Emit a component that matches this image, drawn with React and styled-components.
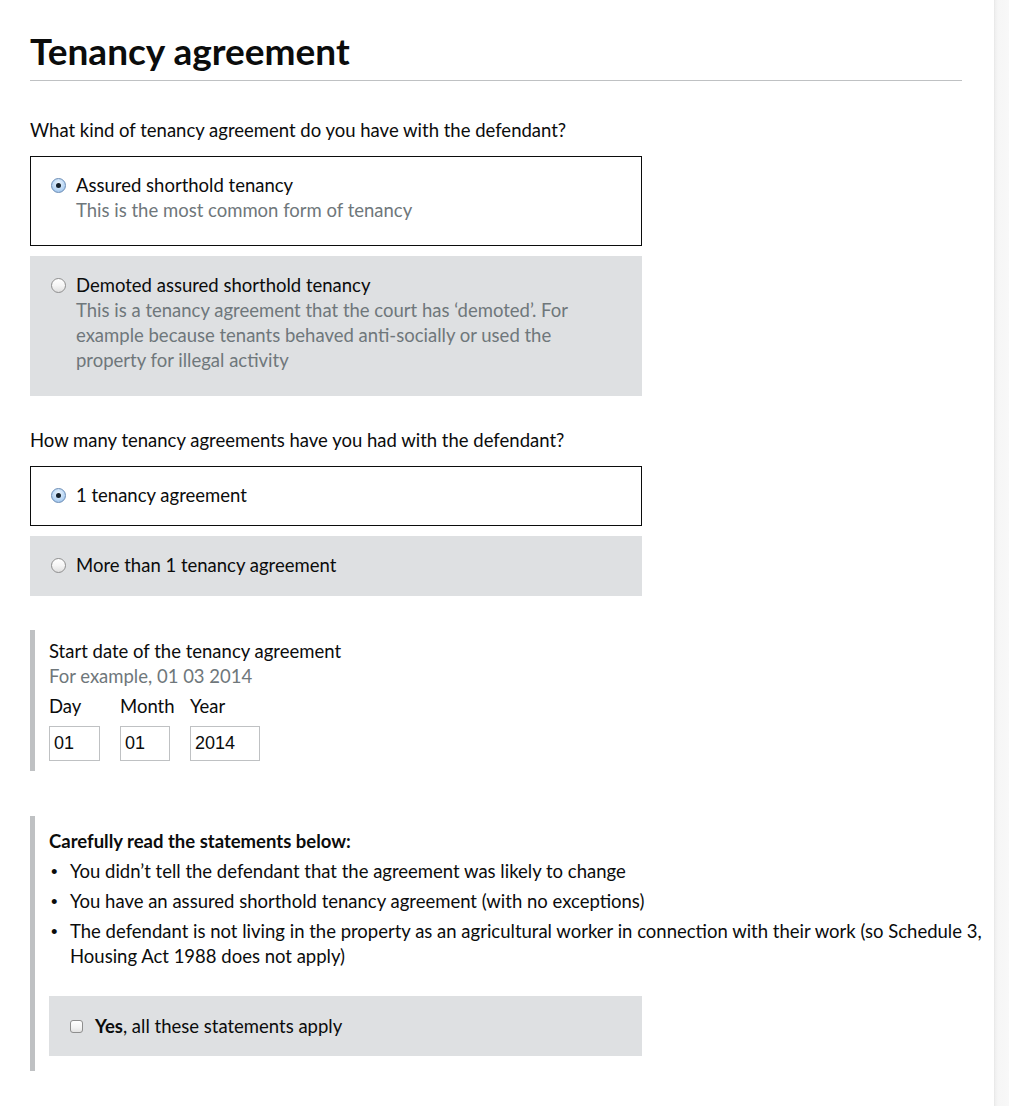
import React from "react";
import styled, { createGlobalStyle, css } from "styled-components";

const GlobalStyle = createGlobalStyle`
  html, body {
    margin: 0;
    padding: 0;
    background: #ffffff;
  }
  body {
    font-family: Lato, "Liberation Sans", Arial, sans-serif;
    color: #0b0c0c;
    font-size: 18.5px;
    line-height: 25px;
  }
  * { box-sizing: border-box; }
`;

const Page = styled.div`
  display: flex;
  min-height: 100vh;
`;

const Main = styled.main`
  flex: 1;
  min-width: 0;
  padding: 0 32px 40px 30px;
`;

const Scrollbar = styled.div`
  width: 15px;
  flex-shrink: 0;
  background: linear-gradient(to right, #e4e4e4 0, #efefef 1px, #f6f6f6 4px, #f8f8f8 100%);
`;

const Heading = styled.h1`
  margin: 0;
  padding: 31px 0 9px;
  font-size: 37px;
  line-height: 40px;
  font-weight: 700;
  letter-spacing: 0;
  border-bottom: 1px solid #bfc1c3;
`;

const Fieldset = styled.fieldset`
  margin: ${(p) => p.$top}px 0 0;
  padding: 0;
  border: 0;
  min-width: 0;
`;

const Legend = styled.legend`
  padding: 0;
  margin: 0 0 13px;
  font-size: 18.5px;
  line-height: 25px;
`;

const Options = styled.div`
  display: flex;
  flex-direction: column;
  gap: 10px;
  width: 612px;
`;

const OptionBox = styled.label`
  display: flex;
  align-items: flex-start;
  gap: 10px;
  padding: 16px 20px 17px 20px;
  border: 1px solid ${(p) => (p.$selected ? "#0b0c0c" : "transparent")};
  background: ${(p) => (p.$selected ? "#ffffff" : "#dee0e2")};
  cursor: pointer;
`;

const RadioDot = styled.span`
  flex-shrink: 0;
  width: 15px;
  height: 15px;
  margin-top: 5px;
  border-radius: 50%;
  position: relative;
  ${(p) =>
    p.$checked
      ? css`
          border: 1px solid #6a8cb5;
          background: radial-gradient(circle at 50% 35%, #eef6fe 0, #bcd8f5 55%, #8fb9e6 100%);
          &::after {
            content: "";
            position: absolute;
            left: 50%;
            top: 50%;
            width: 5px;
            height: 5px;
            margin: -2.5px 0 0 -2.5px;
            border-radius: 50%;
            background: #15202b;
          }
        `
      : css`
          border: 1px solid #8e8e8e;
          background: linear-gradient(to bottom, #ffffff 0, #f5f5f5 50%, #e0e0e0 100%);
        `}
`;

const OptionText = styled.div`
  display: flex;
  flex-direction: column;
`;

const OptionLabel = styled.span`
  font-size: 18.5px;
  line-height: 25px;
`;

const Hint = styled.span`
  color: #6f777b;
  font-size: 18.5px;
  line-height: 25px;
  margin-bottom: 5px;
`;

const Panel = styled.div`
  margin-top: ${(p) => p.$top}px;
  border-left: 5px solid #bfc1c3;
  padding: ${(p) => p.$pad};
`;

const Text = styled.div`
  font-size: 18.5px;
  line-height: 25px;
  font-weight: ${(p) => (p.$bold ? 700 : 400)};
  color: ${(p) => (p.$muted ? "#6f777b" : "#0b0c0c")};
  margin-bottom: ${(p) => p.$mb || 0}px;
  white-space: nowrap;
`;

const DateRow = styled.div`
  display: flex;
  gap: 20px;
`;

const DateField = styled.div`
  display: flex;
  flex-direction: column;
  gap: 7px;
  width: ${(p) => p.$w}px;
`;

const DateInput = styled.input`
  width: ${(p) => p.$w}px;
  height: 35px;
  padding: 0 4px;
  border: 1px solid #bfc1c3;
  font-family: "Liberation Sans", Arial, sans-serif;
  font-size: 18px;
  color: #0b0c0c;
  background: #fff;
  outline: none;
`;

const BulletList = styled.ul`
  margin: 5px 0 0;
  padding: 0 0 0 21px;
  list-style: none;
`;

const BulletItem = styled.li`
  display: flex;
  margin-bottom: 5px;
  font-size: 18.5px;
  line-height: 25px;
  white-space: nowrap;
  &::before {
    content: "•";
    width: 0;
    margin-left: -19px;
    margin-right: 19px;
    font-family: "Liberation Sans", Arial, sans-serif;
  }
`;

const CheckBox = styled.label`
  display: flex;
  align-items: center;
  gap: 12px;
  width: 593px;
  height: 60px;
  margin-top: 27px;
  padding: 0 0 0 21px;
  background: #dee0e2;
  font-size: 18.5px;
  line-height: 25px;
`;

const CheckMark = styled.span`
  width: 13px;
  height: 13px;
  border: 1px solid #8e8e8e;
  border-radius: 3px;
  background: linear-gradient(to bottom, #ffffff 0, #f3f3f3 60%, #e2e2e2 100%);
  flex-shrink: 0;
`;

const Strong = styled.strong`
  font-weight: 700;
`;

function Radio({ selected, label, hint }) {
  return (
    <OptionBox $selected={selected}>
      <RadioDot $checked={selected} />
      <OptionText>
        <OptionLabel>{label}</OptionLabel>
        {hint && <Hint>{hint}</Hint>}
      </OptionText>
    </OptionBox>
  );
}

function DatePart({ label, width, value }) {
  return (
    <DateField $w={width}>
      <Text>{label}</Text>
      <DateInput $w={width} defaultValue={value} />
    </DateField>
  );
}

export default function App() {
  return (
    <>
      <GlobalStyle />
      <Page>
        <Main>
          <Heading>Tenancy agreement</Heading>

          <Fieldset $top={37}>
            <Legend>What kind of tenancy agreement do you have with the defendant?</Legend>
            <Options>
              <Radio
                selected
                label="Assured shorthold tenancy"
                hint="This is the most common form of tenancy"
              />
              <Radio
                label="Demoted assured shorthold tenancy"
                hint={
                  <>
                    This is a tenancy agreement that the court has ‘demoted’. For
                    <br />
                    example because tenants behaved anti-socially or used the
                    <br />
                    property for illegal activity
                  </>
                }
              />
            </Options>
          </Fieldset>

          <Fieldset $top={32}>
            <Legend>How many tenancy agreements have you had with the defendant?</Legend>
            <Options>
              <Radio selected label="1 tenancy agreement" />
              <Radio label="More than 1 tenancy agreement" />
            </Options>
          </Fieldset>

          <Panel $top={34} $pad="9px 0 10px 14px">
            <Text>Start date of the tenancy agreement</Text>
            <Text $muted $mb={5}>For example, 01 03 2014</Text>
            <DateRow>
              <DatePart label="Day" width={51} value="01" />
              <DatePart label="Month" width={50} value="01" />
              <DatePart label="Year" width={70} value="2014" />
            </DateRow>
          </Panel>

          <Panel $top={45} $pad="13px 0 15px 14px">
            <Text $bold>Carefully read the statements below:</Text>
            <BulletList>
              <BulletItem>You didn’t tell the defendant that the agreement was likely to change</BulletItem>
              <BulletItem>You have an assured shorthold tenancy agreement (with no exceptions)</BulletItem>
              <BulletItem>
                <span>
                  The defendant is not living in the property as an agricultural worker in connection with their work (so Schedule 3,
                  <br />
                  Housing Act 1988 does not apply)
                </span>
              </BulletItem>
            </BulletList>
            <CheckBox>
              <CheckMark />
              <span>
                <Strong>Yes</Strong>, all these statements apply
              </span>
            </CheckBox>
          </Panel>
        </Main>
        <Scrollbar />
      </Page>
    </>
  );
}
